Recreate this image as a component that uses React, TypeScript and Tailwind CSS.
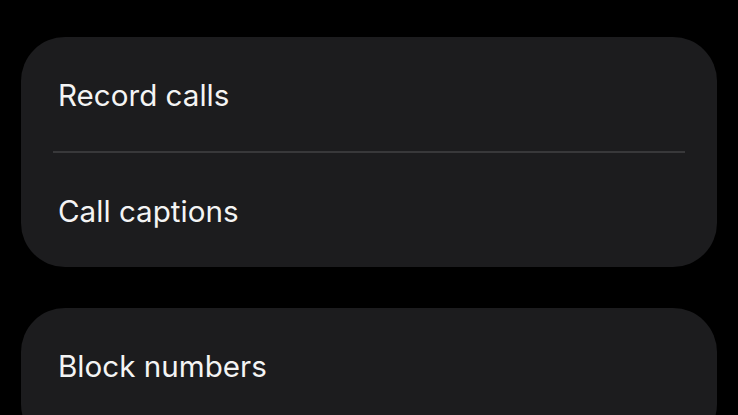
const Row: React.FC<{ label: string }> = ({ label }) => (
  <div className="h-[114px] flex items-center px-[37px] pt-[4px]">
    <span className="text-[29.6px] text-[#f4f4f4] leading-none">{label}</span>
  </div>
);

export default function App() {
  return (
    <div
      className="w-[738px] h-[415px] overflow-hidden bg-black pt-[37px] px-[21px] flex flex-col gap-[41px]"
      style={{ fontFamily: "Inter, Roboto, 'Noto Sans', sans-serif" }}
    >
      <div className="bg-[#1c1c1e] rounded-[44px] flex flex-col shrink-0">
        <Row label="Record calls" />
        <div className="mx-[32px] h-[2px] bg-[#38383a]" />
        <Row label="Call captions" />
      </div>
      <div className="bg-[#1c1c1e] rounded-[44px] flex flex-col shrink-0 h-[140px]">
        <Row label="Block numbers" />
      </div>
    </div>
  );
}
